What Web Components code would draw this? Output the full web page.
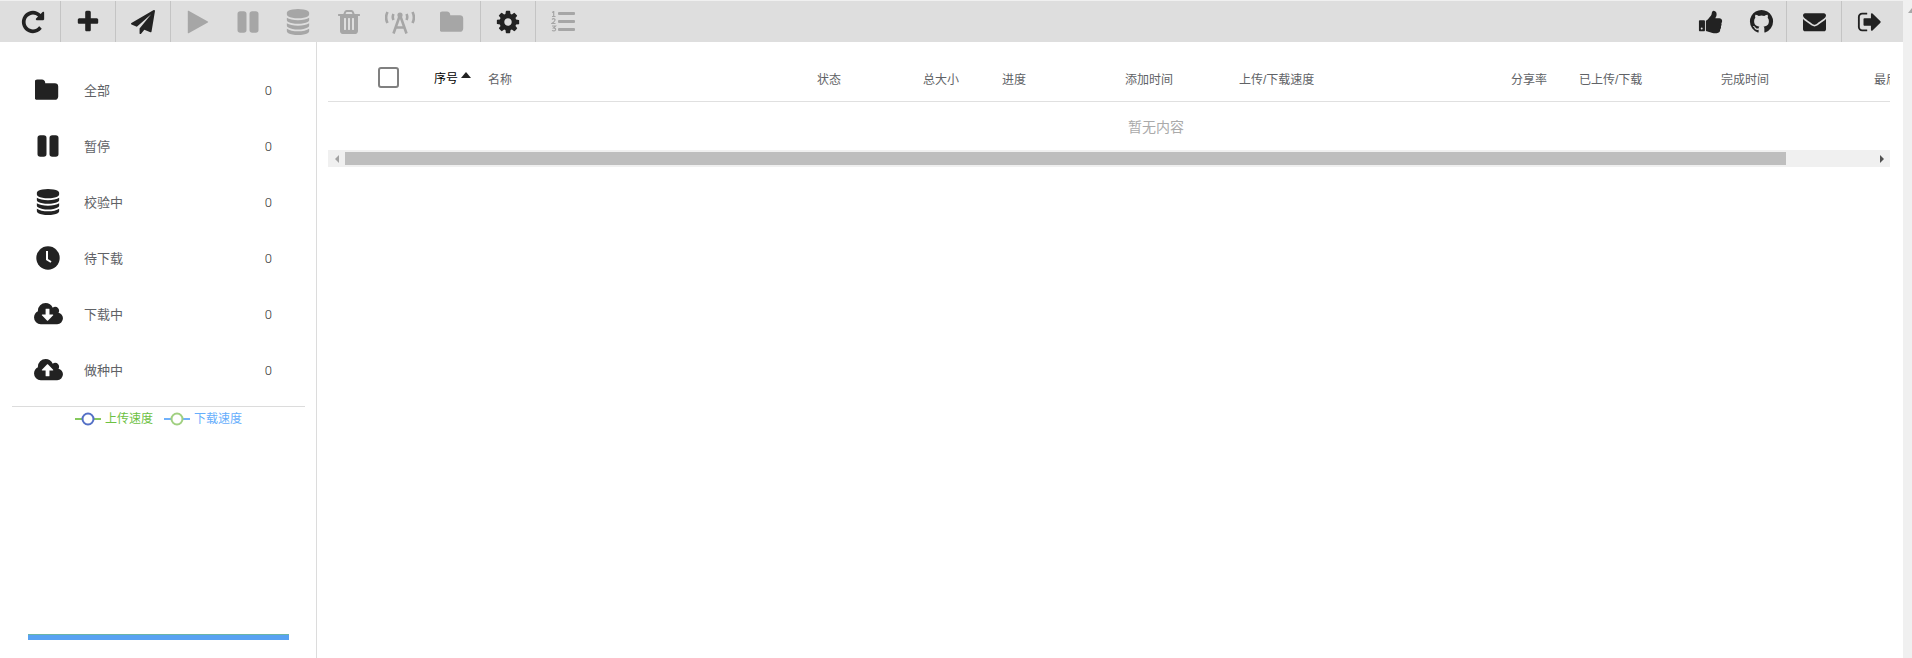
<!DOCTYPE html>
<html lang="zh-CN">
<head>
<meta charset="UTF-8">
<title>Aria2</title>
<style>
    html, body { margin: 0; height: 100%; overflow: hidden; background: #fff; }
    body { font-family: "Liberation Sans", "Noto Sans CJK SC", sans-serif; font-size: 12px; color: #606266; }
</style>
</head>
<body>
<app-shell>
    <tool-bar slot="top">
        <tool-button slot="left" icon="repeat" sep></tool-button>
        <tool-button slot="left" icon="plus" sep></tool-button>
        <tool-button slot="left" icon="plane" sep></tool-button>
        <tool-button slot="left" icon="play" off first style="width:50.8px"></tool-button>
        <tool-button slot="left" icon="pause" off style="width:49.4px"></tool-button>
        <tool-button slot="left" icon="database" off style="width:50.6px"></tool-button>
        <tool-button slot="left" icon="trash" off style="width:49.6px"></tool-button>
        <tool-button slot="left" icon="tower" off style="width:53.2px"></tool-button>
        <tool-button slot="left" icon="folder" off sep style="width:54.4px"></tool-button>
        <tool-button slot="left" icon="cog" sep></tool-button>
        <tool-button slot="left" icon="listol" off></tool-button>
        <tool-button slot="right" icon="thumb" style="width:50.8px"></tool-button>
        <tool-button slot="right" icon="github" sep style="width:50.8px"></tool-button>
        <tool-button slot="right" icon="envelope" sep></tool-button>
        <tool-button slot="right" icon="signout"></tool-button>
    </tool-bar>
    <side-bar slot="side">
        <side-item icon="folder" count="0">全部</side-item>
        <side-item icon="pause" count="0">暂停</side-item>
        <side-item icon="database" count="0">校验中</side-item>
        <side-item icon="clock" count="0">待下载</side-item>
        <side-item icon="clouddown" count="0">下载中</side-item>
        <side-item icon="cloudup" count="0">做种中</side-item>
        <speed-legend slot="legend"></speed-legend>
    </side-bar>
    <task-table slot="main"></task-table>
</app-shell>

<script>
    const paths = {
        repeat: 'M1664 256v448q0 26-19 45t-45 19h-448q-42 0-59-40-17-39 14-69l138-138q-148-137-349-137-104 0-198.500 40.500t-163.500 109.500-109.500 163.500-40.500 198.500 40.500 198.500 109.500 163.500 163.500 109.500 198.500 40.500q119 0 225-52t179-147q7-10 23-12 15 0 25 9l137 138q9 8 9.500 20.500t-7.500 22.500q-109 132-264 204.500t-327 72.500q-156 0-298-61t-245-164-164-245-61-298 61-298 164-245 245-164 298-61q147 0 284.500 55.500t244.500 156.500l130-129q29-31 70-14 39 17 39 59z',
        plus: 'M1600 736v192q0 40-28 68t-68 28h-416v416q0 40-28 68t-68 28h-192q-40 0-68-28t-28-68v-416h-416q-40 0-68-28t-28-68v-192q0-40 28-68t68-28h416v-416q0-40 28-68t68-28h192q40 0 68 28t28 68v416h416q40 0 68 28t28 68z',
        plane: 'M1764 11q33 24 27 64l-256 1536q-5 29-32 45-14 8-31 8-11 0-24-5l-453-185-242 295q-18 23-49 23-13 0-22-4-19-7-30.500-23.500t-11.500-36.500v-349l864-1059-1069 925-395-162q-37-14-40-55-2-40 32-59l1664-960q15-9 32-9 20 0 36 11z',
        play: 'M1576 927l-1328 738q-23 13-39.500 3t-16.500-36v-1472q0-26 16.500-36t39.500 3l1328 738q23 13 23 31t-23 31z',
        database: 'M896 768q237 0 443-43t325-127v170q0 69-103 128t-280 93.500-385 34.500-385-34.500-280-93.500-103-128v-170q119 84 325 127t443 43zm0 768q237 0 443-43t325-127v170q0 69-103 128t-280 93.500-385 34.500-385-34.500-280-93.500-103-128v-170q119 84 325 127t443 43zm0-384q237 0 443-43t325-127v170q0 69-103 128t-280 93.500-385 34.500-385-34.500-280-93.500-103-128v-170q119 84 325 127t443 43zm0-1152q208 0 385 34.500t280 93.500 103 128v128q0 69-103 128t-280 93.500-385 34.500-385-34.500-280-93.500-103-128v-128q0-69 103-128t280-93.500 385-34.500z',
        trash: 'M704 1376v-704q0-14-9-23t-23-9h-64q-14 0-23 9t-9 23v704q0 14 9 23t23 9h64q14 0 23-9t9-23zm256 0v-704q0-14-9-23t-23-9h-64q-14 0-23 9t-9 23v704q0 14 9 23t23 9h64q14 0 23-9t9-23zm256 0v-704q0-14-9-23t-23-9h-64q-14 0-23 9t-9 23v704q0 14 9 23t23 9h64q14 0 23-9t9-23zm-544-992h448l-48-117q-7-9-17-11h-317q-10 2-17 11zm928 32v64q0 14-9 23t-23 9h-96v948q0 83-47 143.500t-113 60.500h-832q-66 0-113-58.500t-47-141.500v-952h-96q-14 0-23-9t-9-23v-64q0-14 9-23t23-9h309l70-167q15-37 54-63t79-26h320q40 0 79 26t54 63l70 167h309q14 0 23 9t9 23z',
        folder: 'M1600 648v704q0 92-66 158t-158 66h-1216q-92 0-158-66t-66-158v-960q0-92 66-158t158-66h320q92 0 158 66t66 158v32h672q92 0 158 66t66 158z',
        cog: 'M1152 896q0-106-75-181t-181-75-181 75-75 181 75 181 181 75 181-75 75-181zm512-109v222q0 12-8 23t-20 13l-185 28q-19 54-39 91 35 50 107 138 10 12 10 25t-9 23q-27 37-99 108t-94 71q-12 0-26-9l-138-108q-44 23-91 38-16 136-29 186-7 28-36 28h-222q-14 0-24.500-8.500t-11.500-21.500l-28-184q-49-16-90-37l-141 107q-10 9-25 9-14 0-25-11-126-114-165-168-7-10-7-23 0-12 8-23 15-21 51-66.500t54-70.500q-27-50-41-99l-183-27q-13-2-21-12.500t-8-23.500v-222q0-12 8-23t19-13l186-28q14-46 39-92-40-57-107-138-10-12-10-24 0-10 9-23 26-36 98.500-107.500t94.500-71.500q13 0 26 10l138 107q44-23 91-38 16-136 29-186 7-28 36-28h222q14 0 24.500 8.500t11.500 21.500l28 184q49 16 90 37l142-107q9-9 24-9 13 0 25 10 129 119 165 170 7 8 7 22 0 12-8 23-15 21-51 66.500t-54 70.500q26 50 41 98l183 28q13 2 21 12.500t8 23.500z',
        thumb: 'M320 1344q0-26-19-45t-45-19q-27 0-45.500 19t-18.500 45q0 27 18.500 45.500t45.500 18.500q26 0 45-18.500t19-45.500zm160-512v640q0 26-19 45t-45 19h-288q-26 0-45-19t-19-45v-640q0-26 19-45t45-19h288q26 0 45 19t19 45zm1184 0q0 86-55 149 15 44 15 76 3 76-43 137 17 56 0 117-15 57-54 94 9 112-49 181-64 76-197 78h-129q-66 0-144-15.500t-121.500-29-120.500-39.500q-123-43-158-44-26-1-45-19.500t-19-44.500v-641q0-25 18-43.500t43-20.500q24-2 76-59t101-121q68-87 101-120 18-18 31-48t17.500-48.500 13.500-60.500q7-39 12.500-61t19.500-52 34-50q19-19 45-19 46 0 82.500 10.500t60 26 40 40.500 24 45 12 50 5 45 .5 39q0 38-9.500 76t-19 60-27.500 56q-3 6-10 18t-11 22-8 24h277q78 0 135 57t57 135z',
        github: 'M896 128q209 0 385.500 103t279.500 279.500 103 385.500q0 251-146.500 451.500t-378.500 277.500q-27 5-40-7t-13-30q0-3 .5-76.500t.5-134.500q0-97-52-142 57-6 102.500-18t94-39 81-66.500 53-105 20.500-150.500q0-119-79-206 37-91-8-204-28-9-81 11t-92 44l-38 24q-93-26-192-26t-192 26q-16-11-42.500-27t-83.500-38.500-85-13.500q-45 113-8 204-79 87-79 206 0 85 20.500 150t52.500 105 80.500 67 94 39 102.500 18q-39 36-49 103-21 10-45 15t-57 5-65.500-21.500-55.500-62.500q-19-32-48.500-52t-49.500-24l-20-3q-21 0-29 4.500t-5 11.500 9 14 13 12l7 5q22 10 43.500 38t31.500 51l10 23q13 38 44 61.500t67 30 69.500 7 55.500-3.500l23-4q0 38 .5 88.500t.5 54.500q0 18-13 30t-40 7q-232-77-378.500-277.500t-146.500-451.500q0-209 103-385.500t279.500-279.500 385.500-103z',
        envelope: 'M1792 710v794q0 66-47 113t-113 47h-1472q-66 0-113-47t-47-113v-794q44 49 101 87 362 246 497 345 57 42 92.500 65.500t94.500 48 110 24.500h2q51 0 110-24.500t94.500-48 92.500-65.500q170-123 498-345 57-39 100-87zm0-294q0 79-49 151t-122 123q-376 261-468 325-10 7-42.500 30.500t-54 38-52 32.500-57.500 27-50 9h-2q-23 0-50-9t-57.500-27-52-32.500-54-38-42.500-30.500q-91-64-262-182.500t-205-142.500q-62-42-117-115.500t-55-136.500q0-78 41.500-130t118.500-52h1472q65 0 112.500 47t47.500 113z',
        signout: 'M704 1440q0 4 1 20t.5 26.500-3 23.500-10 19.500-20.500 6.500h-320q-119 0-203.500-84.500t-84.500-203.500v-704q0-119 84.500-203.500t203.500-84.500h320q13 0 22.500 9.500t9.500 22.500q0 4 1 20t.5 26.500-3 23.500-10 19.500-20.500 6.500h-320q-66 0-113 47t-47 113v704q0 66 47 113t113 47h312l11.500 1 11.500 3 8 5.500 7 9 2 13.500zm928-544q0 26-19 45l-544 544q-19 19-45 19t-45-19-19-45v-288h-448q-26 0-45-19t-19-45v-384q0-26 19-45t45-19h448v-288q0-26 19-45t45-19 45 19l544 544q19 19 19 45z',
        clouddown: 'M1280 928q0-14-9-23t-23-9h-224v-352q0-13-9.500-22.500t-22.500-9.500h-192q-13 0-22.500 9.500t-9.500 22.500v352h-224q-13 0-22.500 9.500t-9.500 22.500q0 14 9 23l352 352q9 9 23 9t23-9l351-351q10-12 10-24zm640 224q0 159-112.500 271.500t-271.500 112.500h-1088q-185 0-316.500-131.500t-131.500-316.500q0-130 70-240t188-165q-2-30-2-43 0-212 150-362t362-150q156 0 285.500 87t188.500 231q71-62 166-62 106 0 181 75t75 181q0 76-41 138 130 31 213.500 135.500t83.500 238.500z',
        cloudup: 'M1280 864q0-14-9-23l-352-352q-9-9-23-9t-23 9l-351 351q-10 12-10 24 0 14 9 23t23 9h224v352q0 13 9.500 22.500t22.500 9.500h192q13 0 22.500-9.500t9.500-22.500v-352h224q13 0 22.500-9.500t9.500-22.500zm640 288q0 159-112.500 271.500t-271.500 112.500h-1088q-185 0-316.500-131.500t-131.500-316.500q0-130 70-240t188-165q-2-30-2-43 0-212 150-362t362-150q156 0 285.500 87t188.500 231q71-62 166-62 106 0 181 75t75 181q0 76-41 138 130 31 213.500 135.500t83.500 238.500z'
    };

    const sizes = { plane: 24, envelope: 23, github: 27, trash: 28 };

    function iconSvg(name) {
        // these few are not plain glyph paths
        if (name === 'tower') {
            return `<svg width="30" height="24" viewBox="0 0 30 24" fill="none" stroke="currentColor" stroke-width="2.6">
                <path d="M15 5L8.500 23.500M15 5l6.500 18.500M10.500 17.500h9"/>
                <circle cx="15" cy="5" r="2.600" fill="currentColor" stroke="none"/>
                <path d="M8.500 4q-1.500 3 0 6M21.500 4q1.500 3 0 6M2.500 2q-2.800 5.500 0 11M27.500 2q2.800 5.500 0 11"/>
            </svg>`;
        }
        if (name === 'clock') {
            return `<svg width="26" height="26" viewBox="0 0 26 26"><circle cx="13" cy="13" r="11.700" fill="currentColor"/>
                <path d="M12 6v8.500l4 2.500" fill="none" stroke="#fff" stroke-width="2"/></svg>`;
        }
        if (name === 'pause') {
            return `<svg width="26" height="26" viewBox="0 0 26 26" fill="currentColor">
                <rect x="2.500" y="2.200" width="9" height="21.600" rx="2.800"/><rect x="14.500" y="2.200" width="9" height="21.600" rx="2.800"/></svg>`;
        }
        if (name === 'listol') {
            return `<svg width="24" height="21" viewBox="0 0 24 21" fill="currentColor">
                <rect x="7" y="1" width="17" height="3" rx="1"/><rect x="7" y="9" width="17" height="3" rx="1"/><rect x="7" y="17" width="17" height="3" rx="1"/>
                <path d="M1.200 1.500l1.500-1v5M1 5.500h3.500M1 8.500q1.500-1.500 3 0q.5 1-3 4h3.500M1 15h3.500l-2 2q2.500 0 2 2q-1 1.500-3.500.5" fill="none" stroke="currentColor" stroke-width="1.200"/></svg>`;
        }
        const wide = name === 'clouddown' || name === 'cloudup';
        const s = sizes[name] || 26;
        const w = wide ? 29 : s, h = wide ? 27 : s;
        return `<svg width="${w}" height="${h}" viewBox="0 0 ${wide ? 1920 : 1792} 1792" fill="currentColor"><path d="${paths[name]}"/></svg>`;
    }

    class AppShell extends HTMLElement {
        connectedCallback() {
            this.attachShadow({mode: 'open'}).innerHTML = `
                <style>
                    :host { display: flex; height: 100vh; }
                    .page { flex: 1; display: flex; flex-direction: column; min-width: 0; }
                    .body { flex: 1; display: flex; min-height: 0; }
                    .bar { width: 9px; background: #f0f0f0; overflow: hidden; display: flex; justify-content: flex-end; padding-top: 8px; box-sizing: border-box; }
                    .bar i { width: 0; height: 0; margin-right: -4px; border: 4px solid transparent; border-top: 0; border-bottom: 5px solid #a8a8a8; }
                </style>
                <div class="page">
                    <slot name="top"></slot>
                    <div class="body"><slot name="side"></slot><slot name="main"></slot></div>
                </div>
                <div class="bar"><i></i></div>`;
        }
    }

    class ToolBar extends HTMLElement {
        connectedCallback() {
            this.attachShadow({mode: 'open'}).innerHTML = `
                <style>
                    :host { display: flex; justify-content: space-between; height: 41px; padding: 0 6px 0 6px; background: #dedede; border-top: 1px solid #f0f0f0; }
                    div { display: flex; }
                </style>
                <div><slot name="left"></slot></div>
                <div><slot name="right"></slot></div>`;
        }
    }

    class ToolButton extends HTMLElement {
        connectedCallback() {
            this.attachShadow({mode: 'open'}).innerHTML = `
                <style>
                    :host { display: flex; align-items: center; justify-content: center; box-sizing: border-box; width: 55px; color: #222; }
                    :host([first]) { margin-left: 2px; }
                    :host([off]) { color: #a6a6a6; }
                    :host([sep]) { border-right: 1px solid #c4c4c4; }
                    svg { display: block; }
                </style>
                ${iconSvg(this.getAttribute('icon'))}`;
        }
    }

    class SideBar extends HTMLElement {
        connectedCallback() {
            this.attachShadow({mode: 'open'}).innerHTML = `
                <style>
                    :host { display: flex; flex-direction: column; box-sizing: border-box; width: 317px; flex: none; padding-top: 20px; border-right: 1px solid #dcdcdc; }
                    .line { height: 1px; margin: 8px 11px 0 12px; background: #dcdcdc; }
                    .progress { height: 6px; margin: auto 27px 18px 28px; background: #58a2f2; border-top: 1px solid #6bb5a6; box-sizing: border-box; }
                </style>
                <slot></slot>
                <div class="line"></div>
                <slot name="legend"></slot>
                <div class="progress"></div>`;
        }
    }

    class SideItem extends HTMLElement {
        connectedCallback() {
            this.attachShadow({mode: 'open'}).innerHTML = `
                <style>
                    :host { display: flex; align-items: center; height: 56px; padding: 0 44px 0 33px; font-size: 13px; color: #606266; }
                    .icon { width: 30px; display: flex; justify-content: center; color: #222; }
                    .label { flex: 1; margin: -2px 0 0 21px; }
                    .count { font-family: Roboto, sans-serif; font-weight: 300; font-size: 13px; color: #333; margin-top: 1px; }
                    svg { display: block; }
                </style>
                <span class="icon">${iconSvg(this.getAttribute('icon'))}</span>
                <span class="label"><slot></slot></span>
                <span class="count">${this.getAttribute('count')}</span>`;
        }
    }

    class SpeedLegend extends HTMLElement {
        connectedCallback() {
            const mark = (line, ring) => `<svg width="26" height="14" viewBox="0 0 26 14">
                <path d="M0 7h26" stroke="${line}" stroke-width="2"/>
                <circle cx="13" cy="7" r="5.500" fill="#fff" stroke="${ring}" stroke-width="2"/></svg>`;
            this.attachShadow({mode: 'open'}).innerHTML = `
                <style>
                    :host { display: flex; align-items: center; height: 24px; padding-left: 75px; font-size: 12px; }
                    span { margin: 0 11px 0 4px; line-height: 16px; }
                    .up { color: #6cc142; }
                    .down { color: #66aefc; margin-right: 0; }
                    svg { flex: none; }
                </style>
                ${mark('#85c95c', '#5470c6')}<span class="up">上传速度</span>
                ${mark('#70b1fb', '#a0d080')}<span class="down">下载速度</span>`;
        }
    }

    class TaskTable extends HTMLElement {
        connectedCallback() {
            const cols = ['名称', '状态', '总大小', '进度', '添加时间', '上传/下载速度', '分享率', '已上传/下载', '完成时间', '最后活动时间'];
            this.attachShadow({mode: 'open'}).innerHTML = `
                <style>
                    :host { display: block; flex: 1; min-width: 0; padding: 13px 13px 0 11px; overflow: hidden; }
                    .clip { overflow: hidden; }
                    .inner { width: 1656px; }
                    .head { display: grid; grid-template-columns: 106px 54px 329px 106px 79px 123px 114px 272px 68px 142px 153px 110px; align-items: center; height: 46px; border-bottom: 1px solid #e0e0e0; white-space: nowrap; }
                    .check { box-sizing: border-box; width: 21px; height: 21px; margin: -1px 0 0 50px; border: 2px solid #808080; border-radius: 3px; }
                    .sort { display: flex; align-items: center; color: #000; margin-top: -1px; }
                    .sort i { width: 0; height: 0; margin: 0 0 5px 3px; border: 5px solid transparent; border-top: 0; border-bottom: 6px solid #222; }
                    .empty { height: 48px; display: flex; align-items: center; justify-content: center; font-size: 14px; color: #aaa; }
                </style>
                <div class="clip"><div class="inner">
                    <div class="head">
                        <div class="check"></div>
                        <div class="sort">序号<i></i></div>
                        ${cols.map(c => `<div>${c}</div>`).join('')}
                    </div>
                    <div class="empty">暂无内容</div>
                </div></div>
                <h-scroll></h-scroll>`;
        }
    }

    class HScroll extends HTMLElement {
        connectedCallback() {
            this.attachShadow({mode: 'open'}).innerHTML = `
                <style>
                    :host { display: flex; height: 17px; background: #f0f0f0; }
                    .arrow { width: 17px; display: flex; align-items: center; justify-content: center; }
                    .l { width: 0; height: 0; border: 4px solid transparent; border-left: 0; border-right: 4px solid #a3a3a3; }
                    .r { width: 0; height: 0; border: 4px solid transparent; border-right: 0; border-left: 4px solid #505050; }
                    .thumb { width: 1441px; margin: 2px 0; background: #bebebe; }
                    .rest { flex: 1; }
                </style>
                <div class="arrow"><i class="l"></i></div>
                <div class="thumb"></div>
                <div class="rest"></div>
                <div class="arrow"><i class="r"></i></div>`;
        }
    }

    customElements.define('app-shell', AppShell);
    customElements.define('tool-bar', ToolBar);
    customElements.define('tool-button', ToolButton);
    customElements.define('side-bar', SideBar);
    customElements.define('side-item', SideItem);
    customElements.define('speed-legend', SpeedLegend);
    customElements.define('task-table', TaskTable);
    customElements.define('h-scroll', HScroll);
</script>
</body>
</html>
